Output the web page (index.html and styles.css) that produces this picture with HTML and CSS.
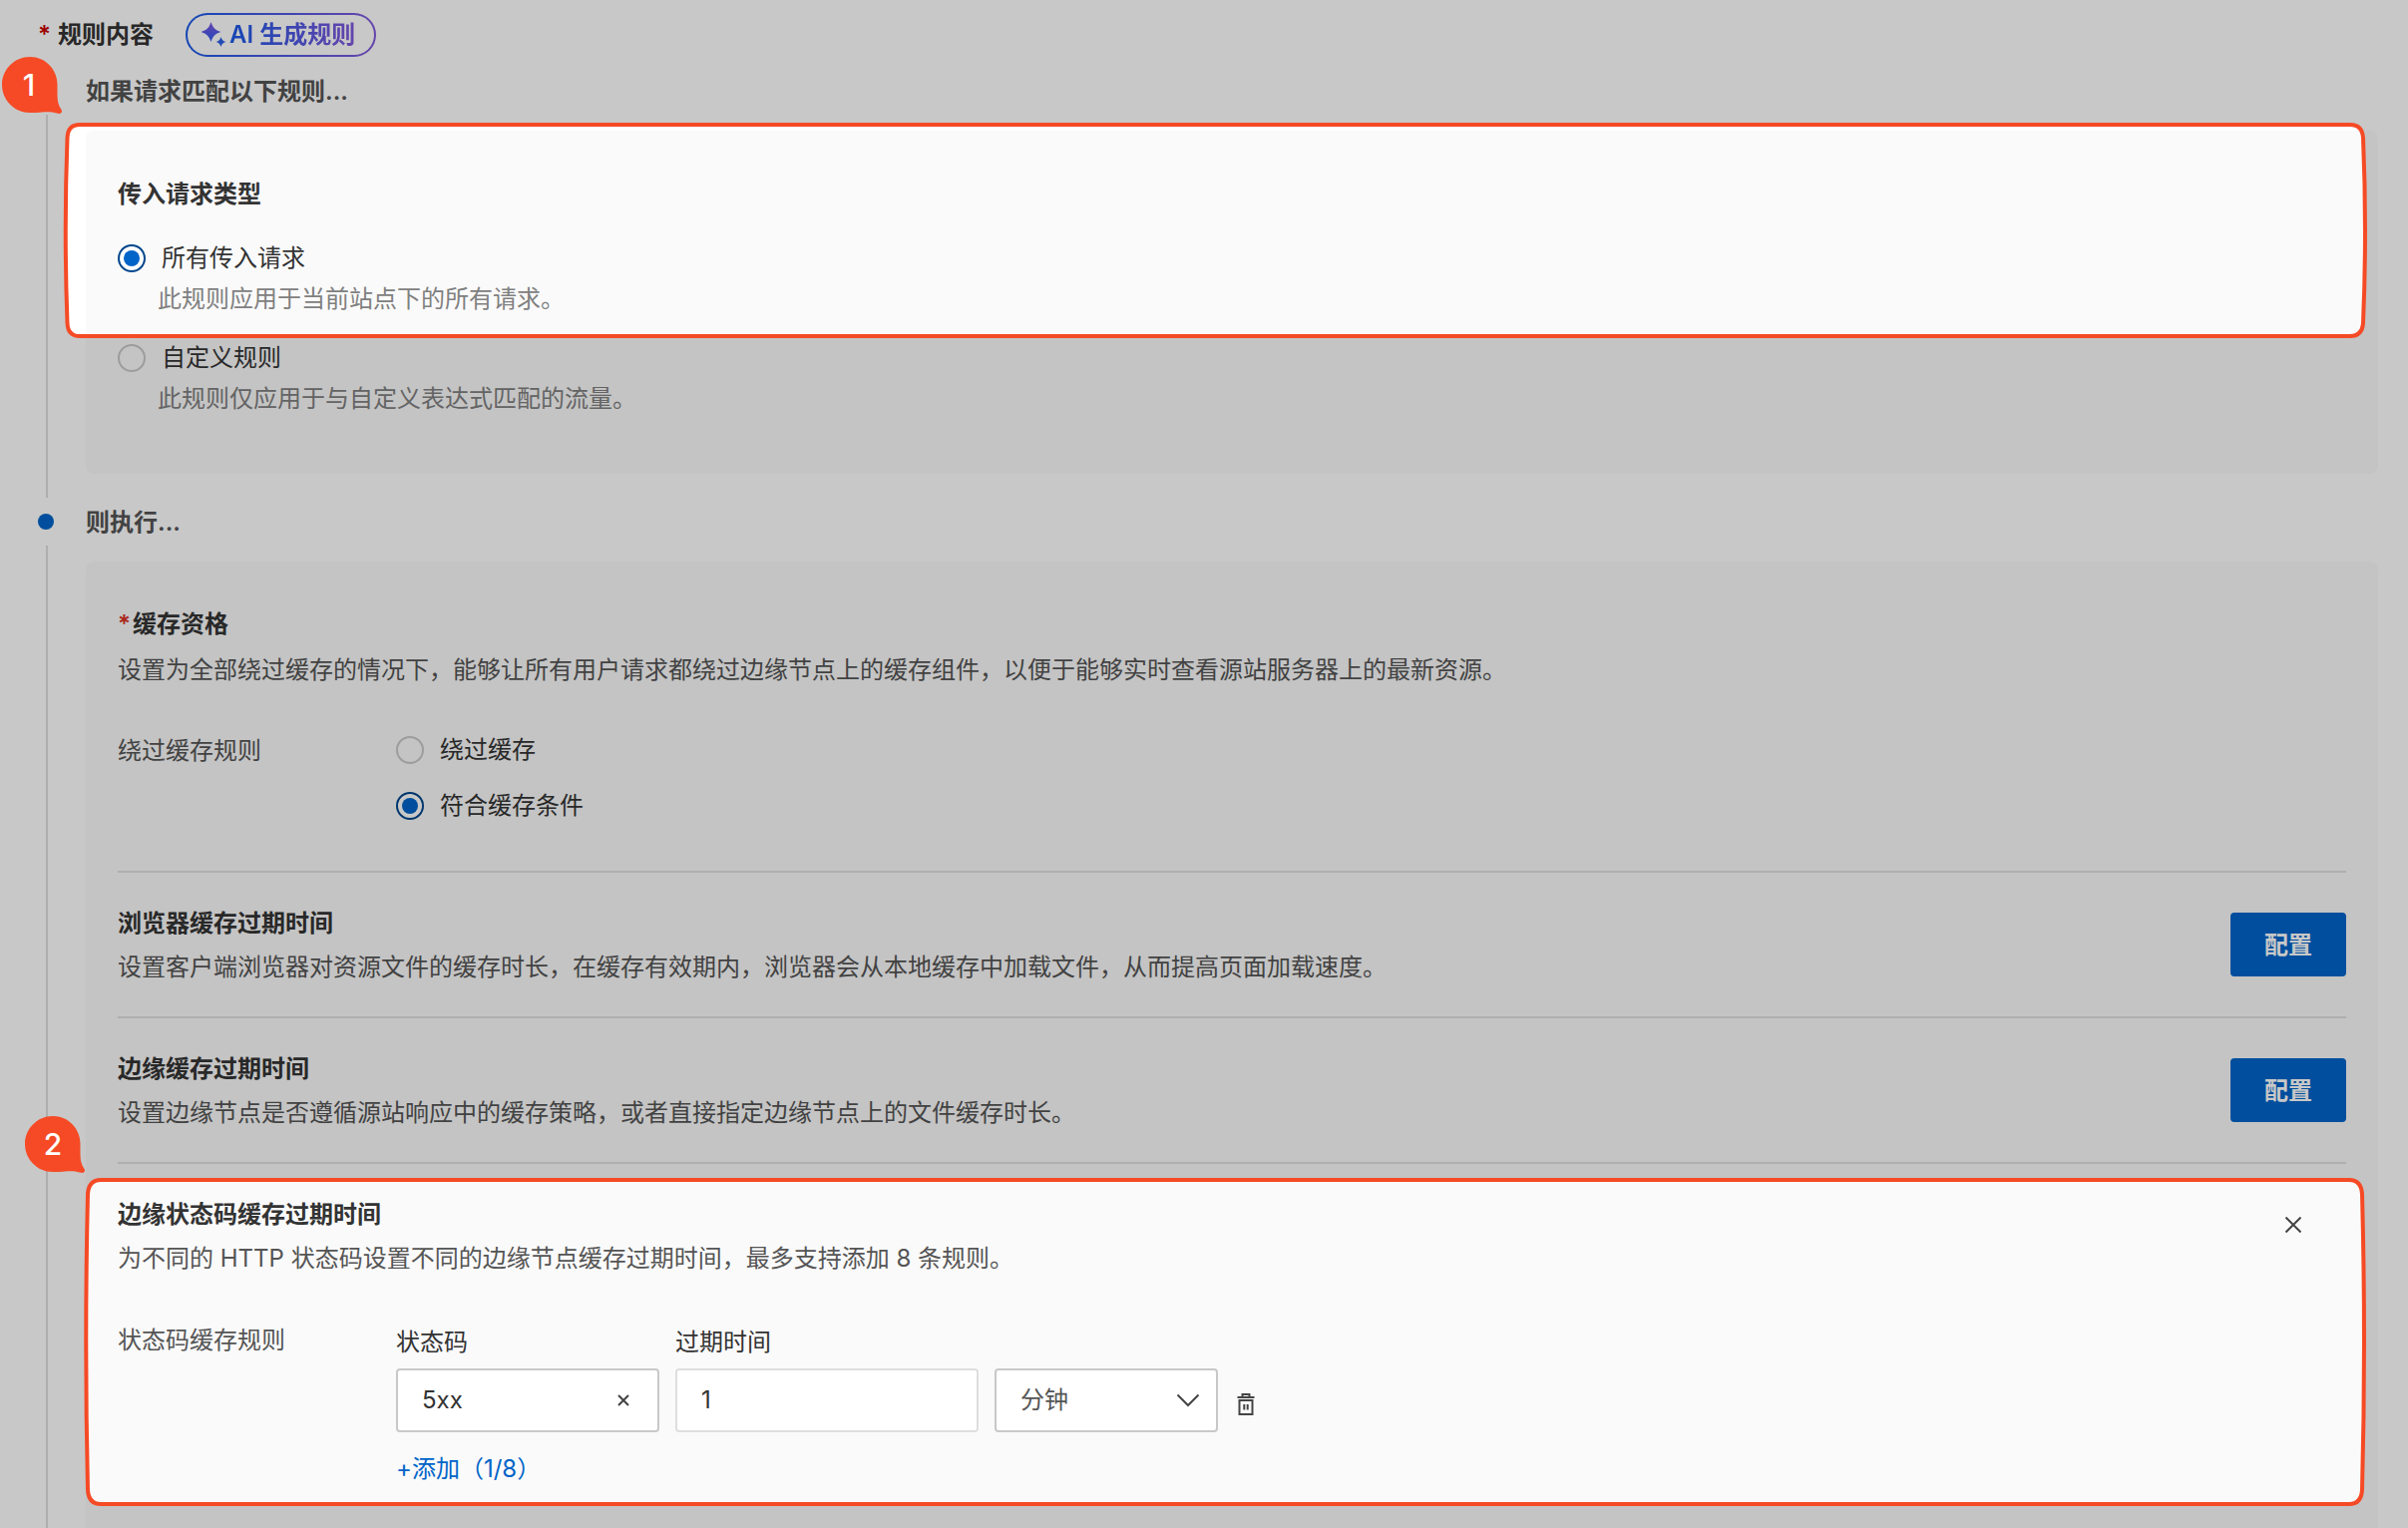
FILE: index.html
```html
<!DOCTYPE html>
<html lang="zh-CN">
<head>
  <meta charset="UTF-8">
  <title>缓存规则</title>
  <link rel="stylesheet" href="styles.css">
</head>
<body>
  <div class="page">
    <div class="header">
      <span class="star">*</span>
      <span class="header-title">规则内容</span>
      <button class="ai-btn">
        <svg width="25" height="28" viewBox="0 0 25 28">
          <defs>
            <linearGradient id="spark" x1="0" y1="1" x2="0" y2="0">
              <stop offset="0" stop-color="#2c5cf0"/>
              <stop offset="1" stop-color="#8257e0"/>
            </linearGradient>
          </defs>
          <path fill="url(#spark)" d="M9.500 1C11.500 7 13.500 9 19.500 11C13.500 13 11.500 15 9.500 21C7.500 15 5.500 13 -0.500 11C5.500 9 7.500 7 9.500 1Z"/>
          <path fill="#2c60e8" d="M19.500 16C20.500 19 21.500 20 24.300 21C21.500 22 20.500 23 19.500 26C18.500 23 17.500 22 14.700 21C17.500 20 18.500 19 19.500 16Z"/>
        </svg>
        <span>AI 生成规则</span>
      </button>
    </div>

    <div class="step">
      <div class="rail"><span class="dot"></span><span class="line"></span></div>
      <div class="step-body">
        <div class="step-title">如果请求匹配以下规则...</div>
        <div class="panel match">
          <h4>传入请求类型</h4>
          <label class="radio"><i class="circle on"></i>所有传入请求</label>
          <p class="hint">此规则应用于当前站点下的所有请求。</p>
          <label class="radio"><i class="circle"></i>自定义规则</label>
          <p class="hint">此规则仅应用于与自定义表达式匹配的流量。</p>
        </div>
      </div>
    </div>

    <div class="step last">
      <div class="rail"><span class="dot"></span><span class="line"></span></div>
      <div class="step-body">
        <div class="step-title">则执行...</div>
        <div class="panel action">
          <div class="section first">
            <h4><span class="star">*</span>缓存资格</h4>
            <p class="desc">设置为全部绕过缓存的情况下，能够让所有用户请求都绕过边缘节点上的缓存组件，以便于能够实时查看源站服务器上的最新资源。</p>
            <div class="form-row">
              <div class="form-label">绕过缓存规则</div>
              <div class="radio-group">
                <label class="radio"><i class="circle"></i>绕过缓存</label>
                <label class="radio"><i class="circle on"></i>符合缓存条件</label>
              </div>
            </div>
          </div>

          <div class="section config">
            <div>
              <h4>浏览器缓存过期时间</h4>
              <p class="desc">设置客户端浏览器对资源文件的缓存时长，在缓存有效期内，浏览器会从本地缓存中加载文件，从而提高页面加载速度。</p>
            </div>
            <button class="btn">配置</button>
          </div>

          <div class="section config">
            <div>
              <h4>边缘缓存过期时间</h4>
              <p class="desc">设置边缘节点是否遵循源站响应中的缓存策略，或者直接指定边缘节点上的文件缓存时长。</p>
            </div>
            <button class="btn">配置</button>
          </div>

          <div class="section">
            <div class="section-head">
              <div>
                <h4>边缘状态码缓存过期时间</h4>
                <p class="desc">为不同的 HTTP 状态码设置不同的边缘节点缓存过期时间，最多支持添加 8 条规则。</p>
              </div>
              <svg class="close" width="16" height="16" viewBox="0 0 16 16"><path d="M0.500 0.500L15.500 15.500M15.500 0.500L0.500 15.500"/></svg>
            </div>
            <div class="form-row codes">
              <div class="form-label">状态码缓存规则</div>
              <div>
                <div class="cols">
                  <div class="col code">
                    <span>状态码</span>
                    <div class="field">5xx
                      <svg width="12" height="12" viewBox="0 0 12 12"><path d="M1 1L11 11M11 1L1 11"/></svg>
                    </div>
                  </div>
                  <div class="col time">
                    <span>过期时间</span>
                    <div class="field light">1</div>
                  </div>
                  <div class="col unit">
                    <div class="field">分钟
                      <svg width="24" height="14" viewBox="0 0 24 14"><path d="M1.500 1.500L12 12L22.500 1.500"/></svg>
                    </div>
                  </div>
                  <svg class="trash" width="18" height="24" viewBox="0 0 18 24"><path d="M0.500 5H17.500M5.500 5V2H12.500V5M2.500 8V22H15.500V8ZM7.300 12V17.500M10.700 12V17.500"/></svg>
                </div>
                <a class="add">+添加（1/8）</a>
              </div>
            </div>
          </div>
        </div>
      </div>
    </div>

    <!-- dark mask with two highlighted areas -->
    <svg class="mask" width="2414" height="1532" viewBox="0 0 2414 1532">
      <path class="shade" fill-rule="evenodd" d="M0 0H2414V1532H0Z
        M80 125H2356Q2368 125 2369 138Q2373 231 2369 324Q2368 337 2356 337H80Q68 337 67.500 324Q64 231 67.500 138Q68 125 80 125Z
        M101 1183H2355Q2367 1183 2368 1197Q2372 1345 2368 1494Q2367 1508 2355 1508H101Q89 1508 88 1494Q84.500 1345 88 1197Q89 1183 101 1183Z"/>
      <path class="outline" d="M80 125H2356Q2368 125 2369 138Q2373 231 2369 324Q2368 337 2356 337H80Q68 337 67.500 324Q64 231 67.500 138Q68 125 80 125Z"/>
      <path class="outline" d="M101 1183H2355Q2367 1183 2368 1197Q2372 1345 2368 1494Q2367 1508 2355 1508H101Q89 1508 88 1494Q84.500 1345 88 1197Q89 1183 101 1183Z"/>
    </svg>
    <div class="badge b1">
      <svg width="61" height="58" viewBox="0 0 61 58"><path d="M28 0C43.500 0 55.500 12.500 55.500 28C55.500 40 55 46 59 52C61.500 55.500 59 58 55 56.500C47 54 40 56 28 56C12.500 56 0 43.500 0 28S12.500 0 28 0Z"/></svg>
      <span>1</span>
    </div>
    <div class="badge b2">
      <svg width="61" height="58" viewBox="0 0 61 58"><path d="M28 0C43.500 0 55.500 12.500 55.500 28C55.500 40 55 46 59 52C61.500 55.500 59 58 55 56.500C47 54 40 56 28 56C12.500 56 0 43.500 0 28S12.500 0 28 0Z"/></svg>
      <span>2</span>
    </div>
  </div>
</body>
</html>
```
FILE: styles.css
```css
* {
  box-sizing: border-box;
}
body {
  margin: 0;
  background: #fff;
  color: #333;
  font-family: Inter, "Noto Sans CJK SC", sans-serif;
  font-size: 24px;
  line-height: 36px;
}
h4, p {
  margin: 0;
  font-size: 24px;
}
h4 {
  font-weight: 600;
}
.page {
  position: relative;
  height: 1532px;
  overflow: hidden;
}
.header {
  display: flex;
  align-items: center;
  height: 70px;
  padding-left: 38px;
}
.star {
  color: #d93026;
}
h4 .star {
  margin-right: 2px;
}
.header .star {
  width: 20px;
  color: #c80000;
  font-weight: 600;
}
.header-title {
  width: 128px;
  font-weight: 600;
}
.ai-btn {
  display: flex;
  align-items: center;
  gap: 3px;
  width: 191px;
  height: 44px;
  padding: 0 0 0 14px;
  border: 2px solid transparent;
  border-radius: 22px;
  background: linear-gradient(#fff, #fff) padding-box, linear-gradient(90deg, #1a5ae8, #8259dc) border-box;
  font: inherit;
  font-weight: 600;
}
.ai-btn span {
  white-space: nowrap;
  background: linear-gradient(90deg, #1a5ae8, #8259dc);
  -webkit-background-clip: text;
  background-clip: text;
  color: transparent;
}

/* steps */
.step {
  display: flex;
  height: 432px;
}
.step.last {
  height: 1030px;
}
.rail {
  display: flex;
  flex-direction: column;
  align-items: center;
  width: 86px;
  padding: 13px 0 3px 8px;
}
.last .rail {
  padding-bottom: 0;
}
.dot {
  width: 16px;
  height: 16px;
  margin-bottom: 16px;
  margin-right: 2px;
  border-radius: 50%;
  background: #0064c8;
}
.line {
  flex: 1;
  width: 2px;
  margin-right: 8px;
  background: #dedede;
}
.rail {
  padding-left: 8px;
}
.rail .line {
  margin-right: 0;
}
.step-body {
  flex: 1;
}
.step-title {
  height: 61px;
  padding-top: 4px;
  color: #555;
  font-weight: 600;
}
.panel {
  width: 2298px;
  padding: 0 32px;
  border-radius: 8px;
  background: #fafafa;
}
.match {
  height: 344px;
  padding-top: 46px;
}
.match h4 {
  margin-bottom: 28px;
}
.radio {
  display: flex;
  align-items: center;
  height: 36px;
}
.circle {
  display: flex;
  align-items: center;
  justify-content: center;
  width: 28px;
  height: 28px;
  margin-right: 16px;
  border: 2px solid #c8c8c8;
  border-radius: 50%;
}
.circle.on {
  border-color: #00468c;
  background: #fff;
}
.circle.on::after {
  content: "";
  width: 16px;
  height: 16px;
  border-radius: 50%;
  background: #0064c8;
}
.hint {
  margin: 5px 0 23px 40px;
  color: #808080;
}

/* action panel */
.action {
  height: 1000px;
  border-radius: 8px 8px 0 0;
}
.section {
  height: 146px;
  padding-top: 33px;
  border-top: 2px solid #e0e0e0;
}
.section.first {
  height: 310px;
  padding-top: 45px;
  border-top: 0;
}
.desc {
  margin-top: 8px;
  color: #555;
}
.first .desc {
  margin-top: 10px;
}
.form-row {
  display: flex;
  margin-top: 44px;
}
.form-label {
  width: 279px;
  padding-top: 1px;
  color: #555;
}
.codes {
  margin-top: 46px;
}
.codes .form-label {
  padding-top: 0;
}
.radio-group {
  display: flex;
  flex-direction: column;
  gap: 20px;
}
.config {
  display: flex;
  justify-content: space-between;
}
.btn {
  width: 116px;
  height: 64px;
  margin-top: 7px;
  padding-top: 2px;
  border: 0;
  border-radius: 4px;
  background: #0064c8;
  color: #fff;
  font: inherit;
  font-weight: 600;
}
.section-head {
  display: flex;
  justify-content: space-between;
}
.close {
  margin: 20px 45px 0 0;
}
svg path {
  stroke-width: 2;
}
.close path, .field path, .trash path {
  fill: none;
  stroke: #444;
}
.cols {
  display: flex;
  align-items: flex-end;
}
.col span {
  display: block;
  height: 46px;
  padding-top: 2px;
}
.field {
  display: flex;
  align-items: center;
  justify-content: space-between;
  height: 64px;
  padding: 0 28px 0 24px;
  border: 2px solid #c8c8c8;
  border-radius: 4px;
  background: #fff;
}
.field.light {
  border-color: #dedede;
}
.code {
  width: 264px;
  margin-right: 16px;
}
.time {
  width: 304px;
  margin-right: 16px;
}
.unit {
  width: 224px;
  margin-right: 19px;
}
.unit .field {
  padding-right: 16px;
  color: #555;
}
.trash {
  margin-bottom: 16px;
}
.add {
  display: block;
  margin-top: 19px;
  color: #0064c8;
}

/* highlight layer */
.mask {
  position: absolute;
  left: 0;
  top: 0;
}
.shade {
  fill: rgba(0, 0, 0, .216);
}
.mask .outline {
  fill: none;
  stroke: #f54a25;
  stroke-width: 4;
}
.badge {
  position: absolute;
  width: 61px;
  height: 58px;
}
.badge path {
  fill: #f54a25;
}
.badge span {
  position: absolute;
  left: 0;
  top: 10px;
  width: 56px;
  color: #fff;
  font-size: 30px;
  font-weight: 500;
  text-align: center;
}
.b1 {
  left: 2px;
  top: 57px;
}
.b1 span {
  left: -1px;
}
.b2 {
  left: 25px;
  top: 1119px;
}
```
